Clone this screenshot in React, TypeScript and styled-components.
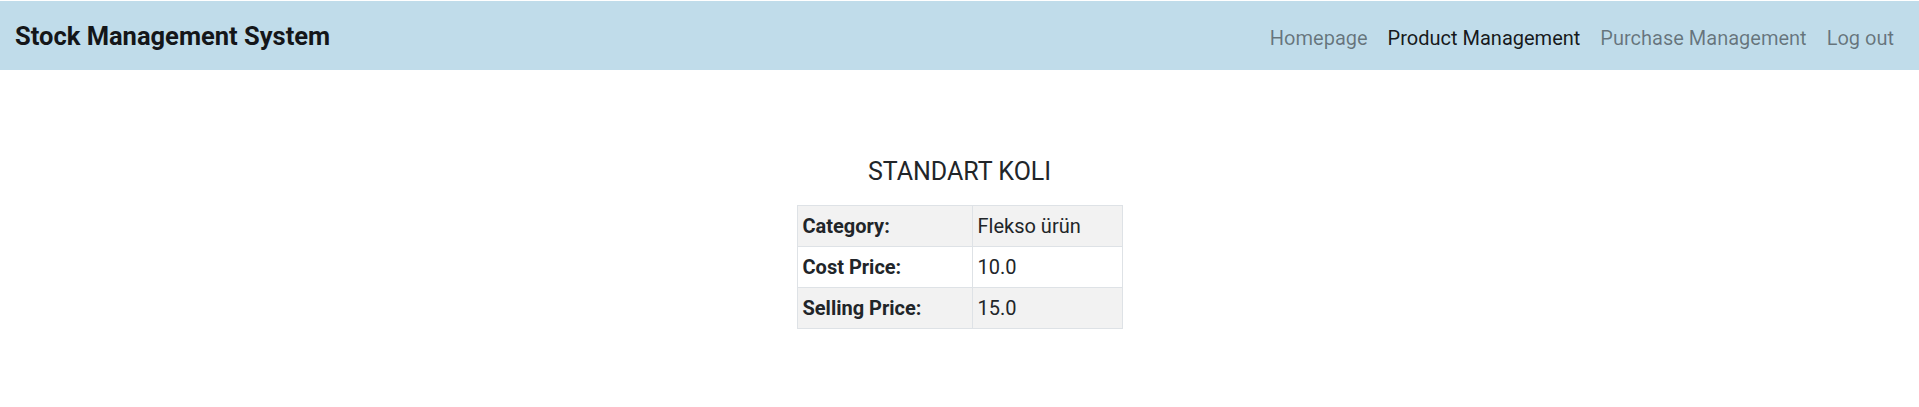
import React from "react";
import styled, { createGlobalStyle } from "styled-components";

const GlobalStyle = createGlobalStyle`
  *, *::before, *::after { box-sizing: border-box; }
  body {
    margin: 0;
    font-family: Roboto, "Noto Sans", sans-serif;
    color: #212529;
    background: #fff;
  }
`;

const Navbar = styled.nav`
  display: flex;
  align-items: center;
  justify-content: space-between;
  height: 70px;
  border-top: 1px solid #fff;
  padding: 0 15px;
  background: #c0dcea;
`;

const Brand = styled.a`
  font-size: 25.5px;
  font-weight: 700;
  color: #141619;
  text-decoration: none;
  line-height: 1.5;
  padding-top: 2px;
`;

const NavList = styled.ul`
  display: flex;
  list-style: none;
  margin: 0;
  padding: 0;
`;

const NavLink = styled.a<{ $active?: boolean }>`
  display: block;
  padding: 12px 10px 8px;
  font-size: 20px;
  line-height: 1.5;
  text-decoration: none;
  color: ${(p) => (p.$active ? "rgba(0,0,0,0.9)" : "rgba(0,0,0,0.47)")};
`;

const Main = styled.main`
  display: flex;
  flex-direction: column;
  align-items: center;
  padding-top: 87px;
`;

const Title = styled.h5`
  margin: 0 0 18px;
  font-size: 25px;
  font-weight: 400;
  line-height: 1.2;
  color: #212529;
`;

const Table = styled.table`
  width: 326px;
  table-layout: fixed;
  border-collapse: collapse;
  font-size: 20px;
  line-height: 1.5;
`;

const Row = styled.tr<{ $striped?: boolean }>`
  background: ${(p) => (p.$striped ? "#f2f2f2" : "#fff")};
`;

const HeadCell = styled.th`
  width: 175px;
  padding: 5px;
  border: 1px solid #dee2e6;
  text-align: left;
  font-weight: 700;
  color: #212529;
`;

const Cell = styled.td`
  padding: 5px;
  border: 1px solid #dee2e6;
  color: #212529;
`;

const rows = [
  { label: "Category:", value: "Flekso ürün" },
  { label: "Cost Price:", value: "10.0" },
  { label: "Selling Price:", value: "15.0" },
];

const links = [
  { label: "Homepage" },
  { label: "Product Management", active: true },
  { label: "Purchase Management" },
  { label: "Log out" },
];

export default function App() {
  return (
    <>
      <GlobalStyle />
      <Navbar>
        <Brand href="#">Stock Management System</Brand>
        <NavList>
          {links.map((l) => (
            <li key={l.label}>
              <NavLink href="#" $active={l.active}>
                {l.label}
              </NavLink>
            </li>
          ))}
        </NavList>
      </Navbar>
      <Main>
        <Title>STANDART KOLI</Title>
        <Table>
          <tbody>
            {rows.map((r, i) => (
              <Row key={r.label} $striped={i % 2 === 0}>
                <HeadCell>{r.label}</HeadCell>
                <Cell>{r.value}</Cell>
              </Row>
            ))}
          </tbody>
        </Table>
      </Main>
    </>
  );
}
